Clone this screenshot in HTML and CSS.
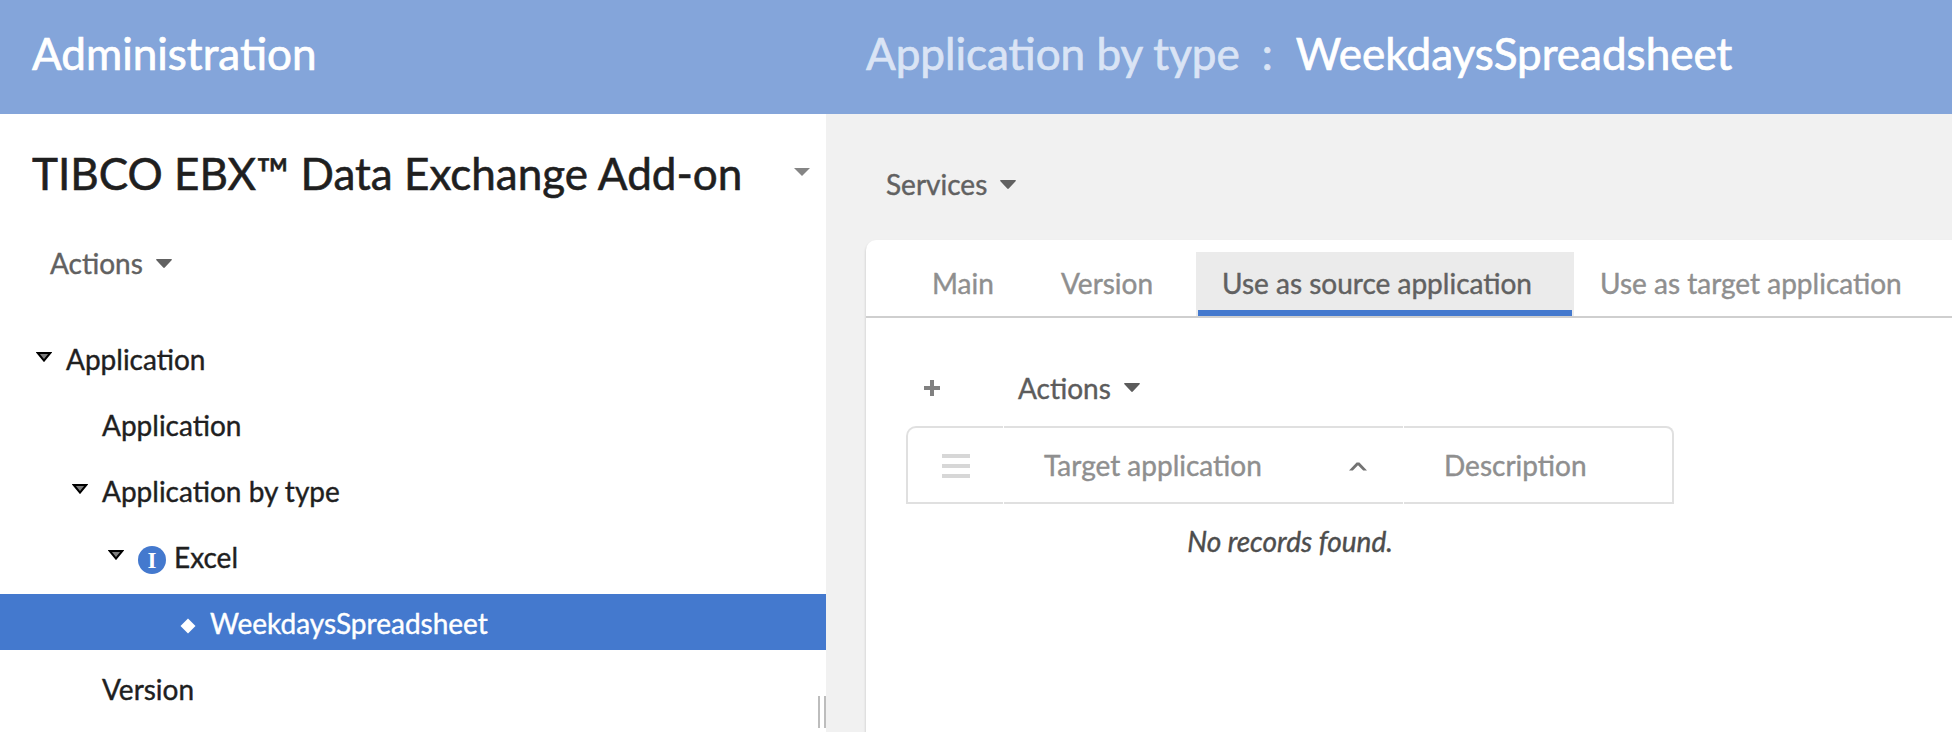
FILE: index.html
```html
<!DOCTYPE html>
<html lang="en">
<head>
<meta charset="utf-8">
<title>Administration</title>
<link rel="stylesheet" href="styles.css">
</head>
<body>
<header class="topbar">
  <h1 class="topbar-section">Administration</h1>
  <div class="topbar-path"><span class="path-parent">Application by type</span><span class="path-sep">:</span><span class="path-current">WeekdaysSpreadsheet</span></div>
</header>
<div class="workspace">
  <aside class="sidebar">
    <div class="sidebar-title">
      <h2 class="dataset-name">TIBCO EBX™ Data Exchange Add-on</h2>
      <svg class="title-caret" viewBox="0 0 16 8"><path d="M0 0h16l-8 8z"/></svg>
    </div>
    <button class="menu-button sidebar-actions"><span>Actions</span><svg class="caret" viewBox="0 0 16 9"><path d="M.7 0h14.6q1 .4.3 1.2L9 8.3q-1 1.2-2 0L.4 1.2Q-.3.4.7 0z"/></svg></button>
    <ul class="tree">
      <li class="node level-0"><svg class="twisty" viewBox="0 0 16 10"><path d="M1.8 1h12.4L8 8.6z"/></svg><span>Application</span></li>
      <li class="node level-1 leaf"><span>Application</span></li>
      <li class="node level-1"><svg class="twisty" viewBox="0 0 16 10"><path d="M1.8 1h12.4L8 8.6z"/></svg><span>Application by type</span></li>
      <li class="node level-2"><svg class="twisty" viewBox="0 0 16 10"><path d="M1.8 1h12.4L8 8.6z"/></svg><span class="badge">I</span><span>Excel</span></li>
      <li class="node level-3 selected"><svg class="diamond" viewBox="0 0 16 16"><path d="M8 .5L15.500 8 8 15.500.5 8z"/></svg><span>WeekdaysSpreadsheet</span></li>
      <li class="node level-1 leaf"><span>Version</span></li>
    </ul>
    <div class="resize-handle"></div>
  </aside>
  <main class="content">
    <button class="menu-button services"><span>Services</span><svg class="caret" viewBox="0 0 16 9"><path d="M.7 0h14.6q1 .4.3 1.2L9 8.3q-1 1.2-2 0L.4 1.2Q-.3.4.7 0z"/></svg></button>
    <section class="card">
      <nav class="tabs">
        <a class="tab tab-main">Main</a>
        <a class="tab tab-version">Version</a>
        <a class="tab tab-source active">Use as source application</a>
        <a class="tab tab-target">Use as target application</a>
      </nav>
      <div class="toolbar">
        <svg class="plus" viewBox="0 0 16 16"><path d="M6 0h4v6h6v4h-6v6H6v-6H0V6h6z"/></svg>
        <button class="menu-button"><span>Actions</span><svg class="caret" viewBox="0 0 16 9"><path d="M.7 0h14.6q1 .4.3 1.2L9 8.3q-1 1.2-2 0L.4 1.2Q-.3.4.7 0z"/></svg></button>
      </div>
      <div class="grid-head">
        <div class="cell cell-menu"><svg class="lines" viewBox="0 0 28 24"><path d="M0 0h28v4H0zM0 10h28v4H0zM0 20h28v4H0z"/></svg></div>
        <div class="cell cell-target"><span>Target application</span><svg class="sort" viewBox="0 0 18 9"><path d="M0 8.5L7.6.5h2.8l7.600 8h-3.800L9 3.200 3.800 8.500z"/></svg></div>
        <div class="cell cell-desc"><span>Description</span></div>
      </div>
      <p class="empty">No records found.</p>
    </section>
  </main>
</div>
</body>
</html>
```
FILE: styles.css
```css
* { box-sizing: border-box; }
body {
  margin: 0;
  height: 732px;
  overflow: hidden;
  display: flex;
  flex-direction: column;
  background: #fff;
  color: #1f1f1f;
  font: 28px/56px Lato, sans-serif;
  -webkit-text-stroke: .4px currentColor;
  white-space: nowrap;
}
h1, h2, p, ul { margin: 0; padding: 0; font-weight: 400; }
svg { display: block; flex: none; fill: currentColor; }

.topbar {
  flex: none;
  display: flex;
  height: 114px;
  padding-top: 25px;
  background: #84a5da;
  color: #fff;
  font-size: 44px;
  -webkit-text-stroke-width: .7px;
}
.topbar-section { width: 866px; padding-left: 32px; font-size: 44px; }
.topbar-path { display: flex; }
.path-parent, .path-sep { color: #dae4f5; -webkit-text-stroke-color: #dae4f5; }
.path-sep { width: 56px; padding-left: 22px; }

.workspace { flex: 1; display: flex; min-height: 0; }
.sidebar { position: relative; width: 826px; }
.sidebar-title {
  display: flex;
  align-items: center;
  justify-content: space-between;
  height: 56px;
  margin: 31px 16px 0 32px;
}
.dataset-name { font-size: 44px; -webkit-text-stroke-width: .6px; }
.title-caret { width: 16px; height: 8px; margin-bottom: 2px; color: #858585; }

.menu-button {
  display: flex;
  align-items: center;
  gap: 13px;
  height: 56px;
  padding: 0;
  border: 0;
  background: none;
  color: #616161;
  font: inherit;
  -webkit-text-stroke: .4px currentColor;
}
.caret { width: 16px; height: 9px; }
.sidebar-actions { margin: 34px 0 0 50px; }

.tree { margin-top: 39px; list-style: none; }
.node { display: flex; align-items: center; height: 56px; margin-bottom: 10px; -webkit-text-stroke-color: currentColor; }
.node span { padding-top: 2px; }
.twisty {
  width: 16px;
  height: 10px;
  margin: 0 14px 3px 0;
  fill: #7d7d7d;
  stroke: #000;
  stroke-width: 2;
}
.level-0 { padding-left: 36px; }
.level-1 { padding-left: 72px; }
.level-2 { padding-left: 108px; }
.level-3 { padding-left: 180px; }
.leaf { padding-left: 102px; }
.node .badge {
  width: 28px;
  height: 28px;
  margin: 8px 8px 0 0;
  padding: 0;
  border-radius: 50%;
  background: #4479ce;
  color: #fff;
  font: bold 23px/29px "Liberation Serif", serif;
  -webkit-text-stroke: 0;
  text-align: center;
}
.selected { background: #4479ce; color: #fff; }
.diamond { width: 16px; height: 16px; margin: 8px 14px 0 0; }
.resize-handle {
  position: absolute;
  right: 0;
  bottom: 4px;
  width: 8px;
  height: 32px;
  border: solid #bdbdbd;
  border-width: 0 2px;
}

.content { flex: 1; min-width: 0; padding: 41px 0 0 40px; background: #f1f1f1; overflow: hidden; }
.services { height: 58px; padding-left: 20px; }
.card {
  height: 520px;
  margin-top: 27px;
  border-radius: 10px 0 0 0;
  background: #fff;
  box-shadow: 0 2px 3px rgba(0, 0, 0, .2);
}
.tabs {
  display: flex;
  height: 78px;
  padding: 12px 0 0 40px;
  border-bottom: 2px solid #cfcfcf;
}
.tab { padding: 3px 0 0 26px; line-height: 56px; color: #8f8f8f; -webkit-text-stroke-color: currentColor; }
.tab-main { width: 129px; }
.tab-version { width: 161px; }
.tab-source { width: 378px; }
.active {
  color: #616161;
  background: linear-gradient(#4479ce, #4479ce) center bottom / calc(100% - 4px) 6px no-repeat #ebebeb;
}
.toolbar { display: flex; align-items: center; gap: 78px; height: 56px; margin: 42px 0 0 58px; }
.toolbar .menu-button { padding-bottom: 1px; color: #5c5c5c; }
.plus { width: 16px; height: 16px; color: #808080; }
.grid-head { display: flex; gap: 1px; width: 768px; height: 78px; margin: 10px 0 0 40px; color: #8f8f8f; }
.cell { display: flex; align-items: center; border: solid #e0e0e0; border-width: 2px 0; -webkit-text-stroke-color: currentColor; }
.cell-menu { width: 97px; padding-left: 34px; border-left-width: 2px; border-top-left-radius: 10px; }
.lines { width: 28px; height: 24px; margin-top: 2px; color: #d7d7d7; }
.cell-target { width: 399px; padding: 0 36px 0 40px; justify-content: space-between; }
.sort { width: 18px; height: 9px; margin-top: 2px; color: #737373; }
.cell-desc { flex: 1; padding-left: 40px; border-right-width: 2px; border-top-right-radius: 8px; }
.empty { width: 768px; margin: 9px 0 0 40px; color: #4d4d4d; font-style: italic; text-align: center; -webkit-text-stroke-color: currentColor; }
```
